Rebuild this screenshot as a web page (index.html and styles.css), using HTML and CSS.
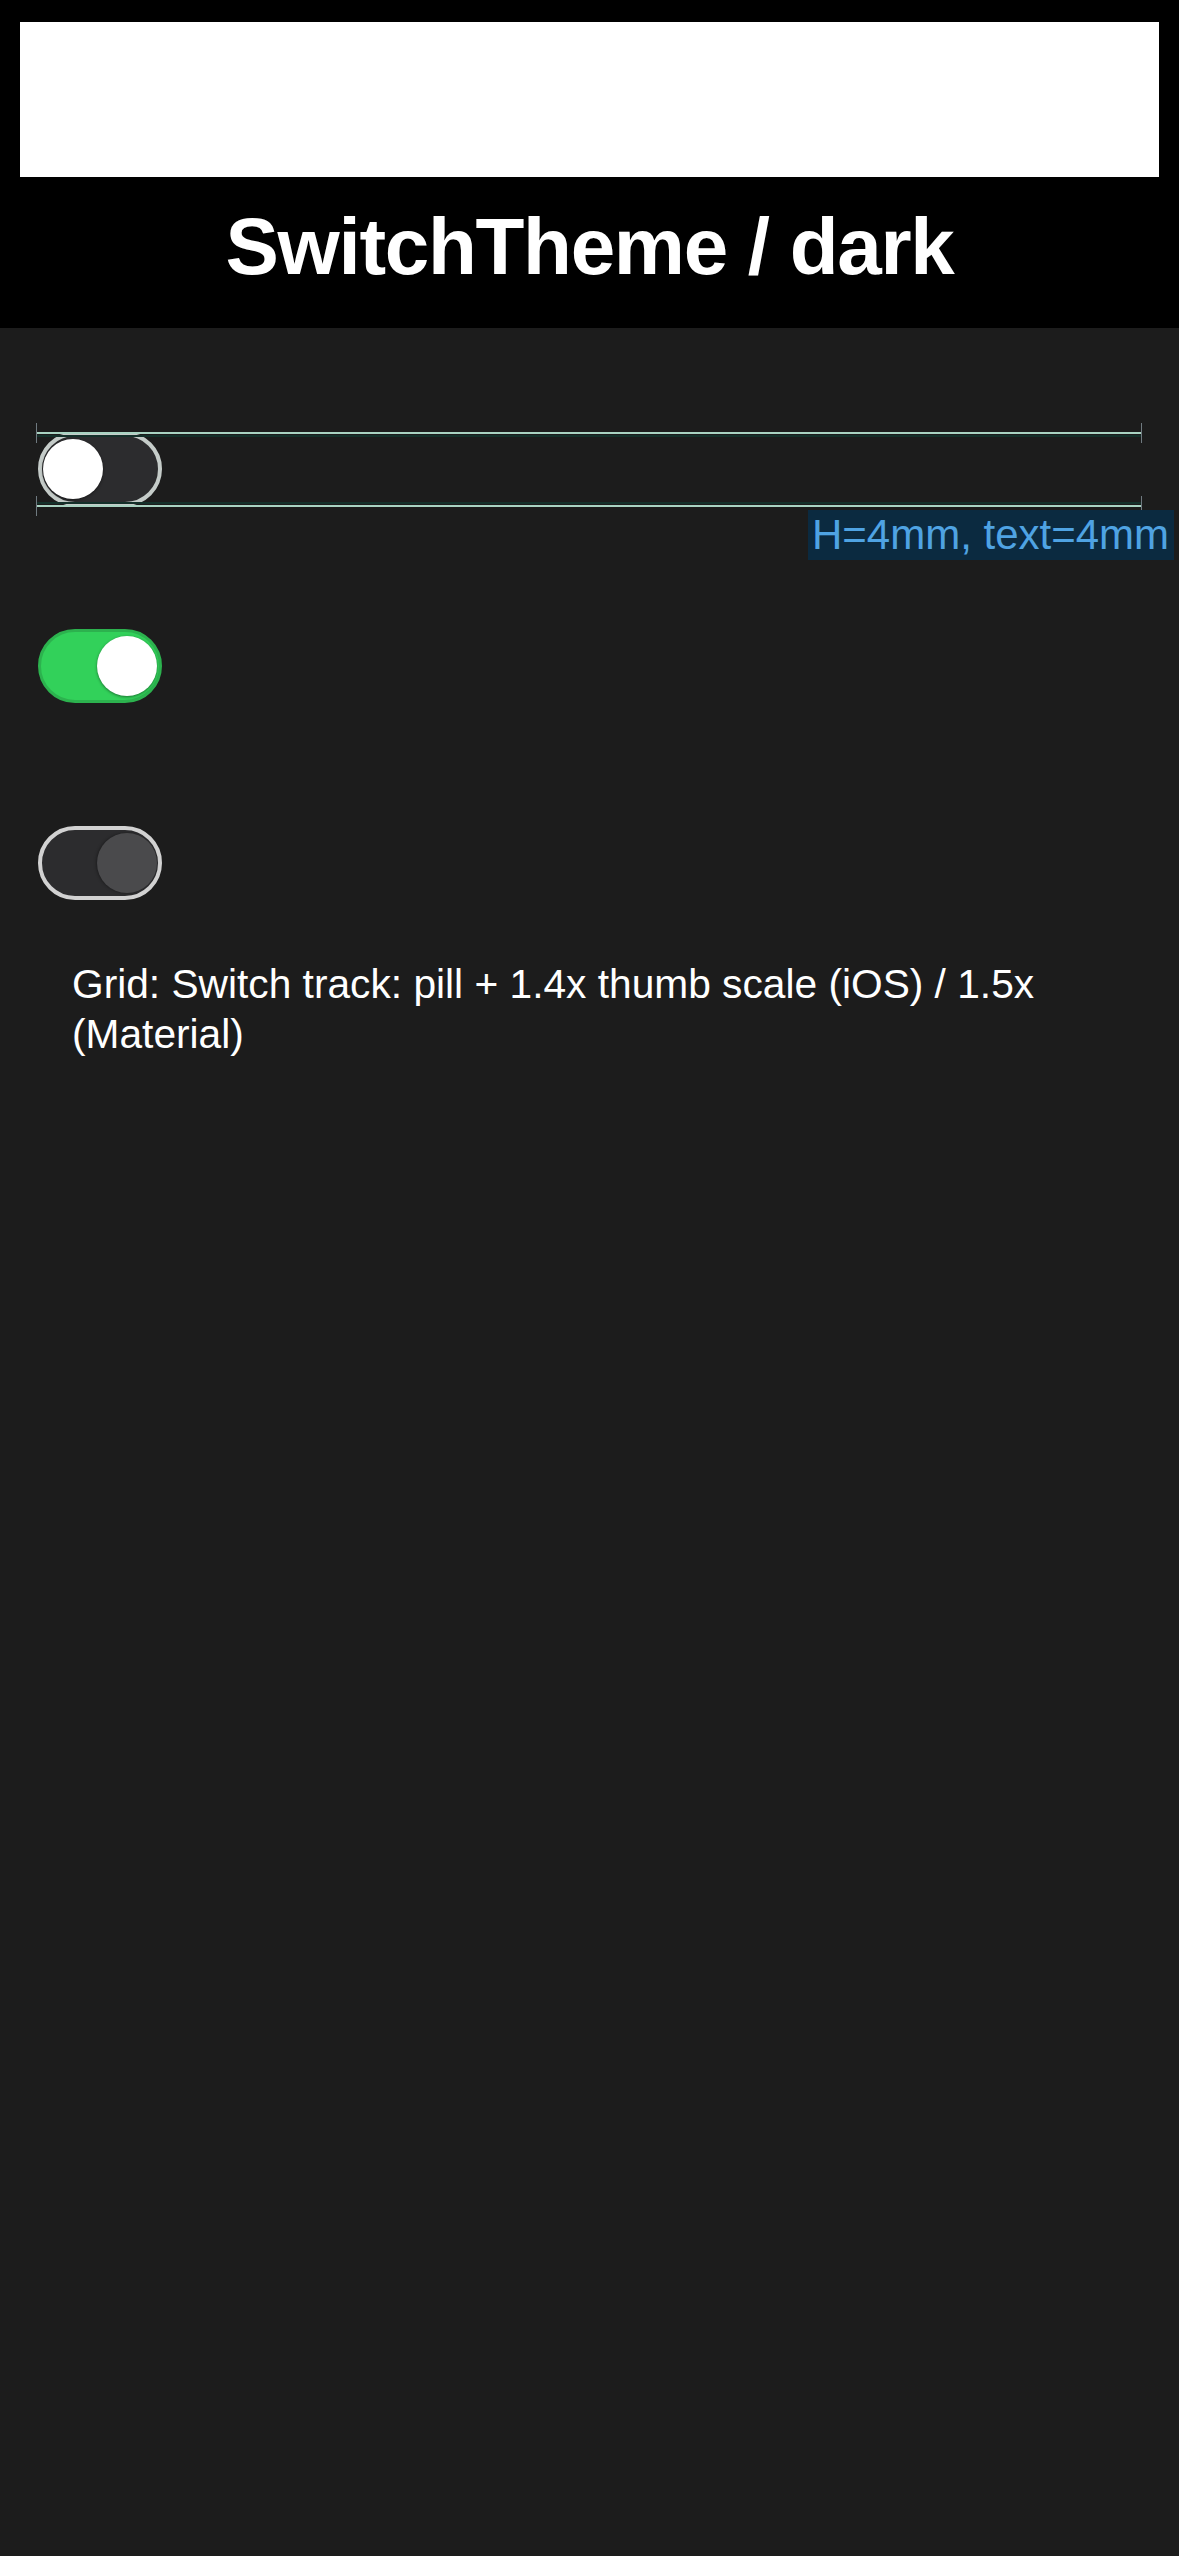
FILE: index.html
```html
<!DOCTYPE html>
<html>
<head>
    <meta charset="utf-8" />
    <title>SwitchTheme / dark</title>
    <link rel="stylesheet" href="styles.css">
</head>
<body>
    <div class="header">
        <div class="banner"></div>
        <h1 class="title">SwitchTheme / dark</h1>
    </div>
    <div class="main">
        <!--off-->
        <div class="row measured">
            <div class="switch off"><span class="thumb"></span></div>
            <div class="guide">
                <span class="rule top"></span>
                <span class="rule bottom"></span>
            </div>
            <span class="guide-label">H=4mm, text=4mm</span>
        </div>
        <!--on-->
        <div class="row">
            <div class="switch on"><span class="thumb"></span></div>
        </div>
        <!--disabled-->
        <div class="row">
            <div class="switch disabled"><span class="thumb"></span></div>
        </div>
        <p class="note">Grid: Switch track: pill + 1.4x thumb scale (iOS) / 1.5x (Material)</p>
    </div>
</body>
</html>
```

FILE: styles.css
```css
html, body {
    margin: 0;
    padding: 0;
}

body {
    width: 1179px;
    min-height: 2556px;
    background-color: #1c1c1c;
    color: #fff;
    font-family: "Liberation Sans", Arial, sans-serif;
}

.header {
    background-color: #000;
    height: 328px;
    box-sizing: border-box;
    padding: 22px 20px 0;
}

    .header .banner {
        height: 155px;
        background-color: #fff;
    }

    .header .title {
        margin: 22px 0 0;
        font-size: 80px;
        line-height: 96px;
        font-weight: 700;
        letter-spacing: -1.3px;
        text-align: center;
    }

.main {
    display: flex;
    flex-direction: column;
    gap: 123px;
    padding: 104px 0 0 38px;
}

.row {
    position: relative;
    height: 74px;
}

/* switch: pill track, round thumb */
.switch {
    width: 124px;
    height: 74px;
    box-sizing: border-box;
    border-radius: 37px;
    border: 4px solid #c5ccc9;
    background-color: #2c2c2e;
    display: flex;
    align-items: center;
    padding: 0 1px;
}

    .switch .thumb {
        width: 60px;
        height: 60px;
        border-radius: 50%;
        background-color: #fff;
        box-shadow: 0 1px 3px rgba(0, 0, 0, .45);
    }

    .switch.on {
        background-color: #32d15a;
        border: 3px solid #2cb24e;
        padding: 0 2px;
        justify-content: flex-end;
    }

    .switch.disabled {
        border-color: #d2d2d2;
        justify-content: flex-end;
    }

        .switch.disabled .thumb {
            background-color: #4a4a4c;
            box-shadow: -1px 0 3px rgba(0, 0, 0, .35);
        }

/* measuring guide over the first row */
.guide {
    position: absolute;
    left: -2px;
    top: 0;
    width: 1106px;
    height: 75px;
    pointer-events: none;
}

    .guide .rule {
        position: absolute;
        left: 0;
        right: 0;
        height: 2px;
        background-color: #a9d3c2;
    }

        .guide .rule::before,
        .guide .rule::after {
            content: "";
            position: absolute;
            top: -9px;
            width: 1px;
            height: 20px;
            background-color: #6f7a80;
        }

        .guide .rule::before {
            left: 0;
        }

        .guide .rule::after {
            right: 0;
        }

    .guide .top {
        top: 0;
        box-shadow: 0 3px 0 #14302a;
    }

    .guide .bottom {
        bottom: 0;
        box-shadow: 0 -3px 0 #14302a;
    }

.guide-label {
    position: absolute;
    left: 770px;
    top: 78px;
    padding: 0 5px 0 4px;
    background-color: #0b2a40;
    color: #4fa3e3;
    font-size: 42px;
    line-height: 50px;
    white-space: nowrap;
}

.note {
    margin: -64px 0 0 34px;
    padding-right: 100px;
    font-size: 40.7px;
    line-height: 50px;
    color: #fff;
}
```
